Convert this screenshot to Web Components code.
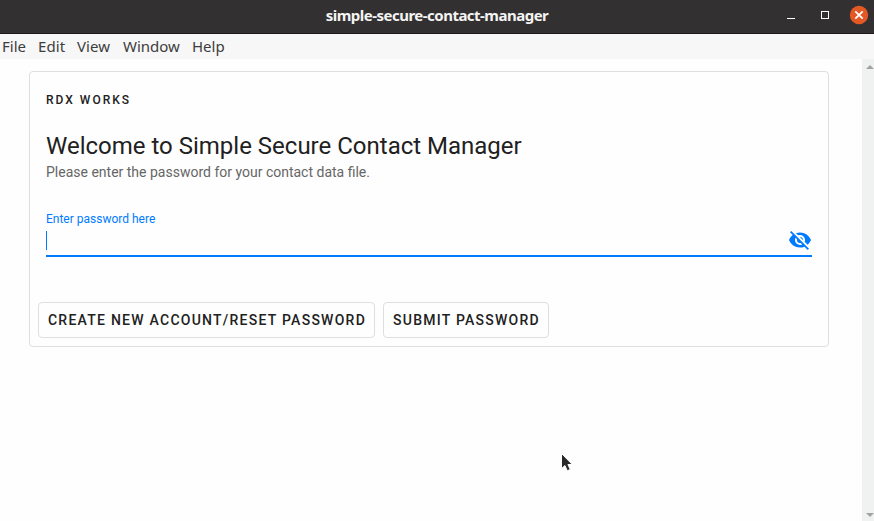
<!DOCTYPE html>
<html lang="en">
<head>
<meta charset="utf-8">
<title>simple-secure-contact-manager</title>
<style>
html,body{margin:0;height:100%;overflow:hidden;background:#fefefe}
body{font-family:Roboto,"Liberation Sans",sans-serif;color:#212121}
</style>
</head>
<body>
<app-window></app-window>
<script>
const define = (name, html) => customElements.define(name, class extends HTMLElement {
  constructor() {
    super();
    const t = document.createElement('template');
    t.innerHTML = html;
    this.attachShadow({mode: 'open'}).append(t.content.cloneNode(true));
  }
});

define('title-bar', `<style>
:host{display:grid;grid-template-columns:1fr auto 1fr;align-items:center;height:34px;background:#333031;border-bottom:1px solid #1c181b;box-sizing:border-box;color:#f4f4f2;font:bold 15px/20px "Noto Sans","Open Sans",sans-serif}
.name{grid-column:2;white-space:nowrap;letter-spacing:-.51px;padding-bottom:3px}
.buttons{display:flex;justify-content:flex-end;padding:0 5px 3px 0}
svg{display:block}
</style>
<span class="name"><slot></slot></span>
<div class="buttons"><svg width="86" height="20" viewBox="0 0 86 20">
<path d="M4 13.5h8" stroke="#fff"/><rect x="38.5" y="6.5" width="7" height="7" fill="none" stroke="#fff"/>
<circle cx="76" cy="10" r="9.2" fill="#e35824"/><path d="M72.3 6.3l7.4 7.4m0-7.4l-7.4 7.4" stroke="#fff" stroke-width="1.8"/></svg></div>`);

define('menu-item', `<style>:host{display:block;width:var(--w);letter-spacing:var(--ls,0);white-space:nowrap}</style><slot></slot>`);
define('menu-bar', `<style>
:host{display:flex;box-sizing:border-box;height:25px;padding:0 0 0 2px;background:#f7f7f7;color:#3d3d3d;font:15px/25px "Noto Sans","Open Sans",sans-serif}
</style><slot></slot>`);

define('scroll-bar', `<style>
:host{display:flex;flex-direction:column;justify-content:space-between;align-items:flex-end;width:12px;background:#f0f1f1;box-sizing:border-box;padding:6px 0 3px}
svg{display:block}
</style>
<svg width="8" height="5"><path d="M0 4h8L4 0z" fill="#a3a3a3"/></svg>
<svg width="8" height="5"><path d="M0 0h8L4 4z" fill="#a3a3a3"/></svg>`);

define('outline-button', `<style>
:host{display:flex;align-items:center;justify-content:center;box-sizing:border-box;width:var(--w);height:36px;padding-left:1px;border:1px solid #dfdfdf;border-radius:4px;font-size:14px;font-weight:500;letter-spacing:1.25px;white-space:nowrap;color:#212121}
</style><slot></slot>`);

define('password-field', `<style>
:host{display:block;height:46px;color:#007bff;border-bottom:2px solid #007bff;box-sizing:border-box}
.label{font-size:12px;line-height:16px;height:17px}
.row{display:flex;justify-content:space-between;align-items:flex-start}
.caret{width:1px;height:19px;background:currentColor;margin-top:3px}
svg{display:block;fill:currentColor}
</style>
<div class="label"><slot></slot></div>
<div class="row"><span class="caret"></span>
<svg width="24" height="24" viewBox="0 0 24 24"><path d="M11.83,9L15,12.16C15,12.11 15,12.05 15,12A3,3 0 0,0 12,9C11.94,9 11.89,9 11.83,9M7.53,9.8L9.08,11.35C9.03,11.56 9,11.77 9,12A3,3 0 0,0 12,15C12.22,15 12.44,14.97 12.65,14.92L14.2,16.47C13.53,16.8 12.79,17 12,17A5,5 0 0,1 7,12C7,11.21 7.2,10.47 7.53,9.8M2,4.27L4.28,6.55L4.73,7C3.08,8.3 1.78,10 1,12C2.73,16.39 7,19.5 12,19.5C13.55,19.5 15.03,19.2 16.38,18.66L16.81,19.08L19.73,22L21,20.73L3.27,3M12,7A5,5 0 0,1 17,12C17,12.64 16.87,13.26 16.64,13.82L19.57,16.75C21.07,15.5 22.27,13.86 23,12C21.27,7.61 17,4.5 12,4.5C10.6,4.5 9.26,4.75 8,5.2L10.17,7.35C10.74,7.13 11.35,7 12,7Z"/></svg></div>`);

define('login-card', `<style>
:host{display:flex;flex-direction:column;box-sizing:border-box;width:800px;height:276px;border:1px solid #dfdfdf;border-radius:4px;padding:0 16px}
.over{font-size:12px;font-weight:500;letter-spacing:2px;line-height:16px;margin-top:20px}
.head{font-size:24px;line-height:32px;margin-top:22px}
.sub{font-size:14px;line-height:20px;color:#666}
password-field{margin-top:29px}
.actions{display:flex;gap:8px;margin:45px -8px 0}
</style>
<div class="over">RDX WORKS</div>
<div class="head">Welcome to Simple Secure Contact Manager</div>
<div class="sub">Please enter the password for your contact data file.</div>
<password-field>Enter password here</password-field>
<div class="actions"><outline-button style="--w:337px">CREATE NEW ACCOUNT/RESET PASSWORD</outline-button><outline-button style="--w:166px">SUBMIT PASSWORD</outline-button></div>`);

define('mouse-pointer', `<style>:host{display:block;position:absolute;left:560px;top:452px}svg{display:block}</style>
<svg width="14" height="21" viewBox="0 0 14 21"><path d="M1.5 1.5v15.2l3.4-3.2 2.4 5.3 3-1.4-2.4-4.9h4.4z" fill="#292929" stroke="#fff" stroke-width="1"/></svg>`);

define('app-window', `<style>
:host{display:flex;flex-direction:column;height:100vh;overflow:hidden}
main{display:flex;flex:1;justify-content:space-between;background:#fefefe}
.page{padding:12px 0 0 29px}
</style>
<title-bar>simple-secure-contact-manager</title-bar>
<menu-bar><menu-item style="--w:36px">File</menu-item><menu-item style="--w:39px;--ls:.1px">Edit</menu-item><menu-item style="--w:46px;--ls:.1px">View</menu-item><menu-item style="--w:69px">Window</menu-item><menu-item style="--w:40px">Help</menu-item></menu-bar>
<main><div class="page"><login-card></login-card></div><scroll-bar></scroll-bar></main>
<mouse-pointer></mouse-pointer>`);
</script>
</body>
</html>
